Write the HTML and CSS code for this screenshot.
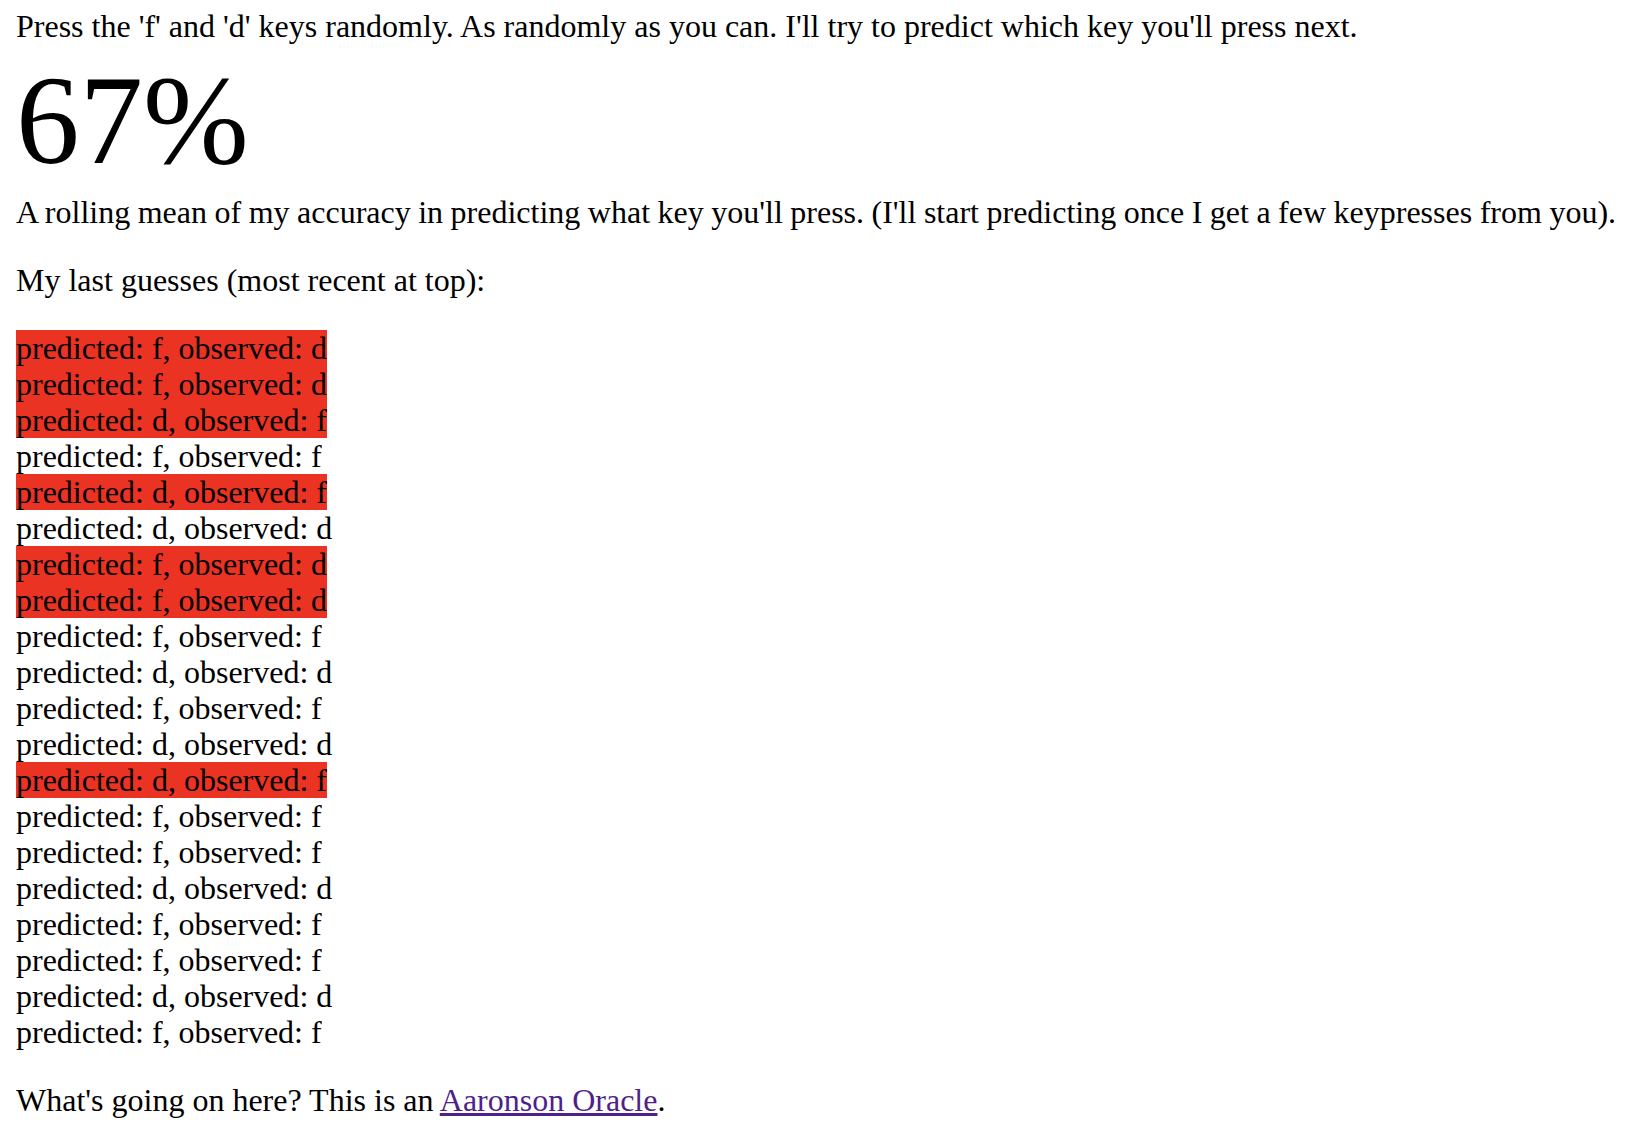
FILE: index.html
```html
<!DOCTYPE html>
<html>
<head>
<meta charset="utf-8">
<title>Aaronson Oracle</title>
<link rel="stylesheet" href="styles.css">
</head>
<body>
<div class="intro">Press the 'f' and 'd' keys randomly. As randomly as you can. I'll try to predict which key you'll press next.</div>
<div class="score">67%</div>
<p class="nowrap">A rolling mean of my accuracy in predicting what key you'll press. (I'll start predicting once I get a few keypresses from you).</p>
<p>My last guesses (most recent at top):</p>
<div class="guesses">
  <div class="guess miss">predicted: f, observed: d</div>
  <div class="guess miss">predicted: f, observed: d</div>
  <div class="guess miss">predicted: d, observed: f</div>
  <div class="guess">predicted: f, observed: f</div>
  <div class="guess miss">predicted: d, observed: f</div>
  <div class="guess">predicted: d, observed: d</div>
  <div class="guess miss">predicted: f, observed: d</div>
  <div class="guess miss">predicted: f, observed: d</div>
  <div class="guess">predicted: f, observed: f</div>
  <div class="guess">predicted: d, observed: d</div>
  <div class="guess">predicted: f, observed: f</div>
  <div class="guess">predicted: d, observed: d</div>
  <div class="guess miss">predicted: d, observed: f</div>
  <div class="guess">predicted: f, observed: f</div>
  <div class="guess">predicted: f, observed: f</div>
  <div class="guess">predicted: d, observed: d</div>
  <div class="guess">predicted: f, observed: f</div>
  <div class="guess">predicted: f, observed: f</div>
  <div class="guess">predicted: d, observed: d</div>
  <div class="guess">predicted: f, observed: f</div>
</div>
<p class="footer">What's going on here? This is an <a href="#">Aaronson Oracle</a>.</p>
</body>
</html>
```
FILE: styles.css
```css
html {
  background: #ffffff;
}
body {
  margin: 8px 16px 0;
  font-family: "Liberation Serif", "Times New Roman", serif;
  font-size: 32px;
  line-height: 36px;
  color: #000000;
}
.intro {
  line-height: 36px;
}
.score {
  font-size: 127px;
  line-height: 84px;
  margin-top: 34px;
}
p {
  margin: 32px 0;
}
.footer {
  margin-bottom: 0;
}
.nowrap {
  white-space: nowrap;
  word-spacing: -0.5px;
}
.guesses {
  display: flex;
  flex-direction: column;
  align-items: flex-start;
}
.guess {
  line-height: 36px;
}
.miss {
  background: #ea3323;
}
a {
  color: #4f1f8a;
  text-decoration: underline;
}
```
